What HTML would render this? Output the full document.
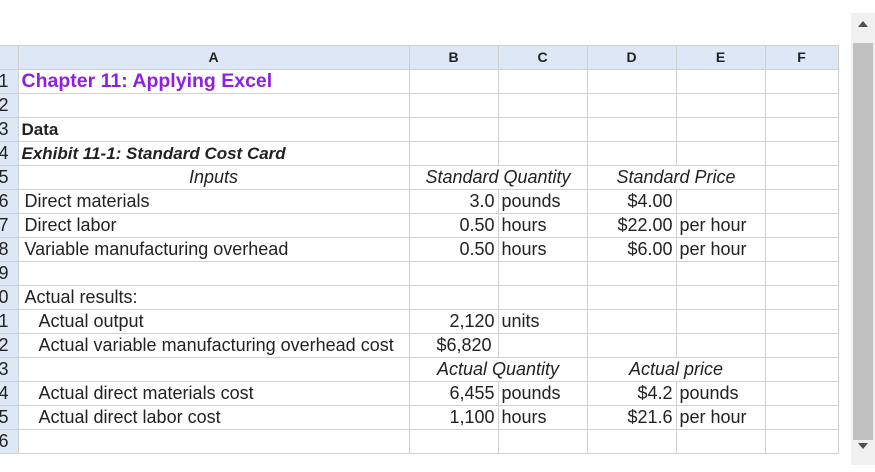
<!DOCTYPE html>
<html><head><style>
body{margin:0;width:875px;height:472px;background:#fff;overflow:hidden;position:relative;font-family:"Liberation Sans",Arial,sans-serif;font-size:18px;color:#222}
table{position:absolute;left:0;top:45px;border-collapse:collapse;table-layout:fixed;width:838px}
td{border:1px solid #d0d0d0;height:23px;padding:0 3px;white-space:nowrap;overflow:visible;line-height:23px}
tr.h td{background:#dde7f5;font-weight:bold;text-align:center;font-size:14px}
td.n{background:#dde7f5;padding:0;border-left:none;position:relative}
td.n span{position:absolute;right:9px;top:0}
.r{text-align:right}.c{text-align:center}.i{font-style:italic}
.t{color:#9020e0;font-weight:bold;font-size:19.5px}
#sb{position:absolute;left:851px;top:13px;width:24px;height:452px;background:#f0f0f0}
#th{position:absolute;left:853px;top:43px;width:20px;height:397px;background:#c0c0c0}
.ar{position:absolute;left:858px;width:0;height:0;border-left:5px solid transparent;border-right:5px solid transparent}
</style></head><body>
<div id="sb"></div><div id="th"></div>
<div class="ar" style="top:21px;border-bottom:6px solid #505050"></div>
<div class="ar" style="top:443px;border-top:6px solid #505050"></div>
<table>
<colgroup><col style="width:18px"><col style="width:391px"><col style="width:89px"><col style="width:89px"><col style="width:89px"><col style="width:89px"><col style="width:73px"></colgroup>
<tr class="h"><td style="border-left:none;padding:0"></td><td>A</td><td>B</td><td>C</td><td>D</td><td>E</td><td>F</td></tr>
<tr><td class="n"><span>1</span></td><td class="t">Chapter 11: Applying Excel</td><td></td><td></td><td></td><td></td><td></td></tr>
<tr><td class="n"><span>2</span></td><td></td><td></td><td></td><td></td><td></td><td></td></tr>
<tr><td class="n"><span>3</span></td><td style="font-weight:bold;font-size:17px">Data</td><td></td><td></td><td></td><td></td><td></td></tr>
<tr><td class="n"><span>4</span></td><td style="font-weight:bold;font-style:italic;font-size:17px">Exhibit 11-1: Standard Cost Card</td><td></td><td></td><td></td><td></td><td></td></tr>
<tr><td class="n"><span>5</span></td><td class="c i">Inputs</td><td colspan="2" class="c i">Standard Quantity</td><td colspan="2" class="c i">Standard Price</td><td></td></tr>
<tr><td class="n"><span>6</span></td><td style="padding-left:6px">Direct materials</td><td class="r">3.0</td><td>pounds</td><td class="r">$4.00</td><td></td><td></td></tr>
<tr><td class="n"><span>7</span></td><td style="padding-left:6px">Direct labor</td><td class="r">0.50</td><td>hours</td><td class="r">$22.00</td><td>per hour</td><td></td></tr>
<tr><td class="n"><span>8</span></td><td style="padding-left:6px">Variable manufacturing overhead</td><td class="r">0.50</td><td>hours</td><td class="r">$6.00</td><td>per hour</td><td></td></tr>
<tr><td class="n"><span>9</span></td><td></td><td></td><td></td><td></td><td></td><td></td></tr>
<tr><td class="n"><span>10</span></td><td style="padding-left:6px">Actual results:</td><td></td><td></td><td></td><td></td><td></td></tr>
<tr><td class="n"><span>11</span></td><td style="padding-left:20px">Actual output</td><td class="r">2,120</td><td>units</td><td></td><td></td><td></td></tr>
<tr><td class="n"><span>12</span></td><td style="padding-left:20px">Actual variable manufacturing overhead cost</td><td style="padding-left:27px">$6,820</td><td></td><td></td><td></td><td></td></tr>
<tr><td class="n"><span>13</span></td><td></td><td colspan="2" class="c i">Actual Quantity</td><td colspan="2" class="c i">Actual price</td><td></td></tr>
<tr><td class="n"><span>14</span></td><td style="padding-left:20px">Actual direct materials cost</td><td class="r">6,455</td><td>pounds</td><td class="r">$4.2</td><td>pounds</td><td></td></tr>
<tr><td class="n"><span>15</span></td><td style="padding-left:20px">Actual direct labor cost</td><td class="r">1,100</td><td>hours</td><td class="r">$21.6</td><td>per hour</td><td></td></tr>
<tr><td class="n"><span>16</span></td><td></td><td></td><td></td><td></td><td></td><td></td></tr>
</table>
</body></html>
